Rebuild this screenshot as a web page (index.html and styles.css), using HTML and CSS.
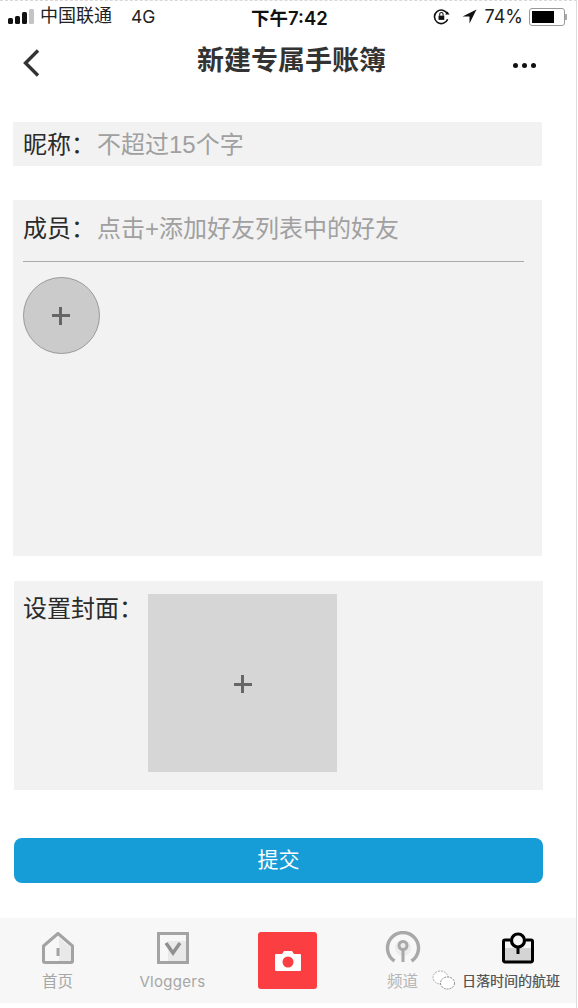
FILE: index.html
```html
<!DOCTYPE html>
<html lang="zh-CN">
<head>
<meta charset="utf-8">
<title>新建专属手账簿</title>
<link rel="stylesheet" href="styles.css">
</head>
<body>
<div class="page">
  <div class="status">
    <div class="status-left">
      <span class="signal"><i class="b1"></i><i class="b2"></i><i class="b3"></i><i class="b4"></i></span>
      <span class="carrier">中国联通</span>
      <span class="net">4G</span>
    </div>
    <div class="status-time">下午7:42</div>
    <div class="status-right">
      <svg class="ic-lock" width="17" height="17" viewBox="0 0 16 16"><path d="M13.6 5.600A6.400 6.400 0 1 0 13.800 10.500" fill="none" stroke="#111" stroke-width="1.500"/><path d="M11.400 6.200h4.200l-2-2.800z" fill="#111"/><rect x="5.200" y="7.200" width="5.400" height="4" fill="#111"/><path d="M6.300 7.400V5.900a1.600 1.600 0 0 1 3.200 0V7.400" fill="none" stroke="#111" stroke-width="1"/></svg>
      <svg class="ic-loc" width="15" height="15" viewBox="0 0 15 15"><path d="M14.500.5 .5 7.400h7V14.500z" fill="#111"/></svg>
      <span class="pct">74%</span>
      <span class="battery"><span class="battery-fill"></span></span>
    </div>
  </div>

  <div class="nav">
    <svg class="back" width="20" height="30" viewBox="0 0 20 30"><path d="M17 2.500 4.500 15 17 27.500" fill="none" stroke="#333" stroke-width="3.400"/></svg>
    <div class="title">新建专属手账簿</div>
    <div class="more"><i></i><i></i><i></i></div>
  </div>

  <div class="card nick">
    <span class="label">昵称：</span><span class="hint">不超过15个字</span>
  </div>

  <div class="card members">
    <div class="member-head"><span class="label">成员：</span><span class="hint">点击+添加好友列表中的好友</span></div>
    <div class="add-circle"><span class="plus"></span></div>
  </div>

  <div class="card cover">
    <span class="label">设置封面：</span>
    <div class="cover-box"><span class="plus"></span></div>
  </div>

  <div class="submit">提交</div>

  <div class="tabs">
    <div class="tab">
      <svg width="34" height="34" viewBox="0 0 34 34"><path d="M18 7 30 17V31H18z" fill="#e9e9e9"/><path d="M2.500 15 17 2.500 31.500 15V30a1.500 1.500 0 0 1-1.500 1.500H4A1.500 1.500 0 0 1 2.500 30z" fill="none" stroke="#a3a3a3" stroke-width="3" stroke-linejoin="round"/><rect x="15.500" y="17" width="3" height="8" fill="#a3a3a3"/></svg>
      <span>首页</span>
    </div>
    <div class="tab">
      <svg width="34" height="34" viewBox="0 0 34 34"><rect x="12" y="10" width="20" height="22" fill="#e9e9e9"/><rect x="2.500" y="2.500" width="29" height="29" fill="none" stroke="#a3a3a3" stroke-width="3"/><path d="M10 12 17 22 24 12" fill="none" stroke="#8f8f8f" stroke-width="3.400"/></svg>
      <span class="latin">Vloggers</span>
    </div>
    <div class="tab tab-cam">
      <div class="cam"><svg width="28" height="24" viewBox="0 0 28 24"><path d="M2 5h6l2-3h8l2 3h6a1 1 0 0 1 1 1v15a1 1 0 0 1-1 1H2a1 1 0 0 1-1-1V6a1 1 0 0 1 1-1z" fill="#fff"/><circle cx="14" cy="13" r="5.500" fill="#fb3e41"/></svg></div>
    </div>
    <div class="tab">
      <svg width="36" height="34" viewBox="0 0 36 34"><circle cx="18" cy="17" r="8" fill="#ececec"/><path d="M9.500 30A15.500 15.500 0 1 1 26.500 30" fill="none" stroke="#a8a8a8" stroke-width="3.400"/><circle cx="18" cy="14.500" r="4" fill="none" stroke="#a8a8a8" stroke-width="3"/><path d="M18 18v13" stroke="#a8a8a8" stroke-width="3"/></svg>
      <span class="pale">频道</span>
    </div>
    <div class="tab">
      <svg width="32" height="34" viewBox="0 0 32 34"><path d="M3 17h26v13H3z" fill="#d4d4d4"/><path d="M8.500 9H3A1.500 1.500 0 0 0 1.500 10.500v19A1.500 1.500 0 0 0 3 31h26a1.500 1.500 0 0 0 1.500-1.500v-19A1.500 1.500 0 0 0 29 9h-5.500" fill="none" stroke="#000" stroke-width="3"/><circle cx="16" cy="9.500" r="6.500" fill="#f8f8f8" stroke="#000" stroke-width="3.200"/><path d="M16 16v7" stroke="#000" stroke-width="3"/></svg>
    </div>
  </div>

  <div class="watermark">
    <svg width="23" height="20" viewBox="0 0 23 20"><ellipse cx="8.500" cy="7.500" rx="7.500" ry="6.500" fill="#fff" stroke="#aaa" stroke-width="1" stroke-dasharray="2 1"/><ellipse cx="15.500" cy="13" rx="7" ry="6" fill="#fff" stroke="#888" stroke-width="1" stroke-dasharray="2 1"/></svg>
    <span>日落时间的航班</span>
  </div>
</div>
</body>
</html>
```

FILE: styles.css
```css
* { box-sizing: border-box; }
html, body { margin: 0; padding: 0; background: #fff; }
body {
  width: 578px;
  height: 1008px;
  overflow: hidden;
  font-family: "Liberation Sans", "Noto Sans CJK SC", sans-serif;
  color: #2b2b2b;
}
.page {
  position: relative;
  width: 577px;
  height: 1008px;
  border-right: 1px solid #dcdcdc;
  border-top: 1px dashed #d8d8d8;
  display: flex;
  flex-direction: column;
}

/* status bar */
.status {
  height: 35px;
  padding: 0 11px 4px 8px;
  display: flex;
  align-items: center;
  justify-content: space-between;
  font-size: 18px;
  color: #222;
  position: relative;
}
.status-left { display: flex; align-items: center; }
.signal { display: flex; align-items: flex-end; gap: 2px; height: 15px; margin-right: 6px; }
.signal i { display: block; width: 5px; background: #111; border-radius: 1.500px; }
.signal .b1 { height: 6px; }
.signal .b2 { height: 8px; }
.signal .b3 { height: 12px; }
.signal .b4 { height: 15px; background: #c4c4c4; }
.carrier { margin-right: 19px; line-height: 24px; margin-top: -2px; }
.net { font-size: 17.500px; font-family: Inter, "Liberation Sans", sans-serif; }
.status-time {
  position: absolute;
  left: 251px;
  top: 3px;
  font-family: Inter, "Noto Sans CJK SC", sans-serif;
  font-size: 18.500px;
  font-weight: 600;
  color: #111;
}
.status-right { display: flex; align-items: center; }
.ic-lock { margin-right: 12px; }
.ic-loc { margin-right: 8px; }
.pct { margin-right: 6px; font-size: 18px; font-family: Inter, "Liberation Sans", sans-serif; font-weight: 400; }
.battery {
  display: block;
  width: 36px;
  height: 18px;
  border: 1px solid #999;
  border-radius: 3px;
  padding: 2px;
  position: relative;
}
.battery::after {
  content: "";
  position: absolute;
  right: -3px;
  top: 5px;
  width: 2px;
  height: 6px;
  background: #aaa;
}
.battery-fill { display: block; width: 74%; height: 100%; background: #000; }

/* nav */
.nav {
  height: 52px;
  display: flex;
  align-items: center;
  justify-content: center;
  position: relative;
}
.back { position: absolute; left: 21px; top: 12px; }
.title {
  font-size: 27px;
  font-weight: 700;
  color: #333;
  margin-top: -7px;
  margin-left: 7px;
}
.more { position: absolute; left: 513px; top: 27px; display: flex; gap: 4px; }
.more i { display: block; width: 5px; height: 5px; border-radius: 50%; background: #111; }

/* cards */
.card { background: #f2f2f2; }
.label { font-size: 24px; color: #2b2b2b; }
.hint { font-size: 24px; color: #a0a0a0; }
.nick {
  margin: 34px 34px 0 13px;
  height: 44px;
  display: flex;
  align-items: center;
  padding: 0 0 4px 10px;
}
.nick .label, .member-head .label { width: 74px; flex: none; }
.members {
  margin: 34px 34px 0 13px;
  height: 356px;
  padding: 0 18px 0 10px;
}
.member-head {
  height: 62px;
  border-bottom: 1px solid #aaa;
  padding-bottom: 8px;
  display: flex;
  align-items: center;
}
.add-circle {
  margin-top: 15px;
  width: 77px;
  height: 77px;
  border-radius: 50%;
  background: #cbcbcb;
  border: 1px solid #999;
  padding-right: 2px;
  display: flex;
  align-items: center;
  justify-content: center;
}
.plus { display: block; position: relative; width: 18px; height: 18px; }
.plus::before, .plus::after { content: ""; position: absolute; background: #666; }
.plus::before { left: 0; right: 0; top: 7.500px; height: 3px; }
.plus::after { top: 0; bottom: 0; left: 7.500px; width: 3px; }
.cover {
  margin: 25px 33px 0 14px;
  height: 209px;
  display: flex;
  align-items: flex-start;
  padding: 13px 0 0 9px;
}
.cover .label { width: 125px; flex: none; line-height: 30px; }
.cover-box {
  width: 189px;
  height: 178px;
  background: #d6d6d6;
  display: flex;
  align-items: center;
  justify-content: center;
  padding-top: 2px;
}
.submit {
  margin: 48px 33px 0 14px;
  height: 45px;
  border-radius: 8px;
  background: #169dd8;
  color: #fff;
  font-size: 21px;
  padding-bottom: 5px;
  display: flex;
  align-items: center;
  justify-content: center;
}

/* tab bar */
.tabs {
  margin-top: 35px;
  height: 85px;
  background: #f7f7f7;
  display: flex;
  font-size: 15.500px;
  color: #a6a6a6;
}
.tab {
  width: 115px;
  display: flex;
  flex-direction: column;
  align-items: center;
  padding-top: 13px;
  gap: 7px;
}
.tab span { line-height: 20px; }
.tab .latin { font-family: Inter, "Liberation Sans", sans-serif; font-size: 15px; letter-spacing: 0.300px; }
.tab .pale { color: #b5b5b5; }
.tab-cam { padding-top: 14px; }
.cam {
  width: 59px;
  height: 57px;
  border-radius: 3px;
  background: #fb3e41;
  display: flex;
  align-items: center;
  justify-content: center;
}

/* watermark overlay */
.watermark {
  position: absolute;
  left: 432px;
  top: 969px;
  display: flex;
  align-items: center;
  gap: 7px;
  font-size: 14px;
  color: #555;
  text-shadow: 0.300px 0.300px 0 #999;
}
```
